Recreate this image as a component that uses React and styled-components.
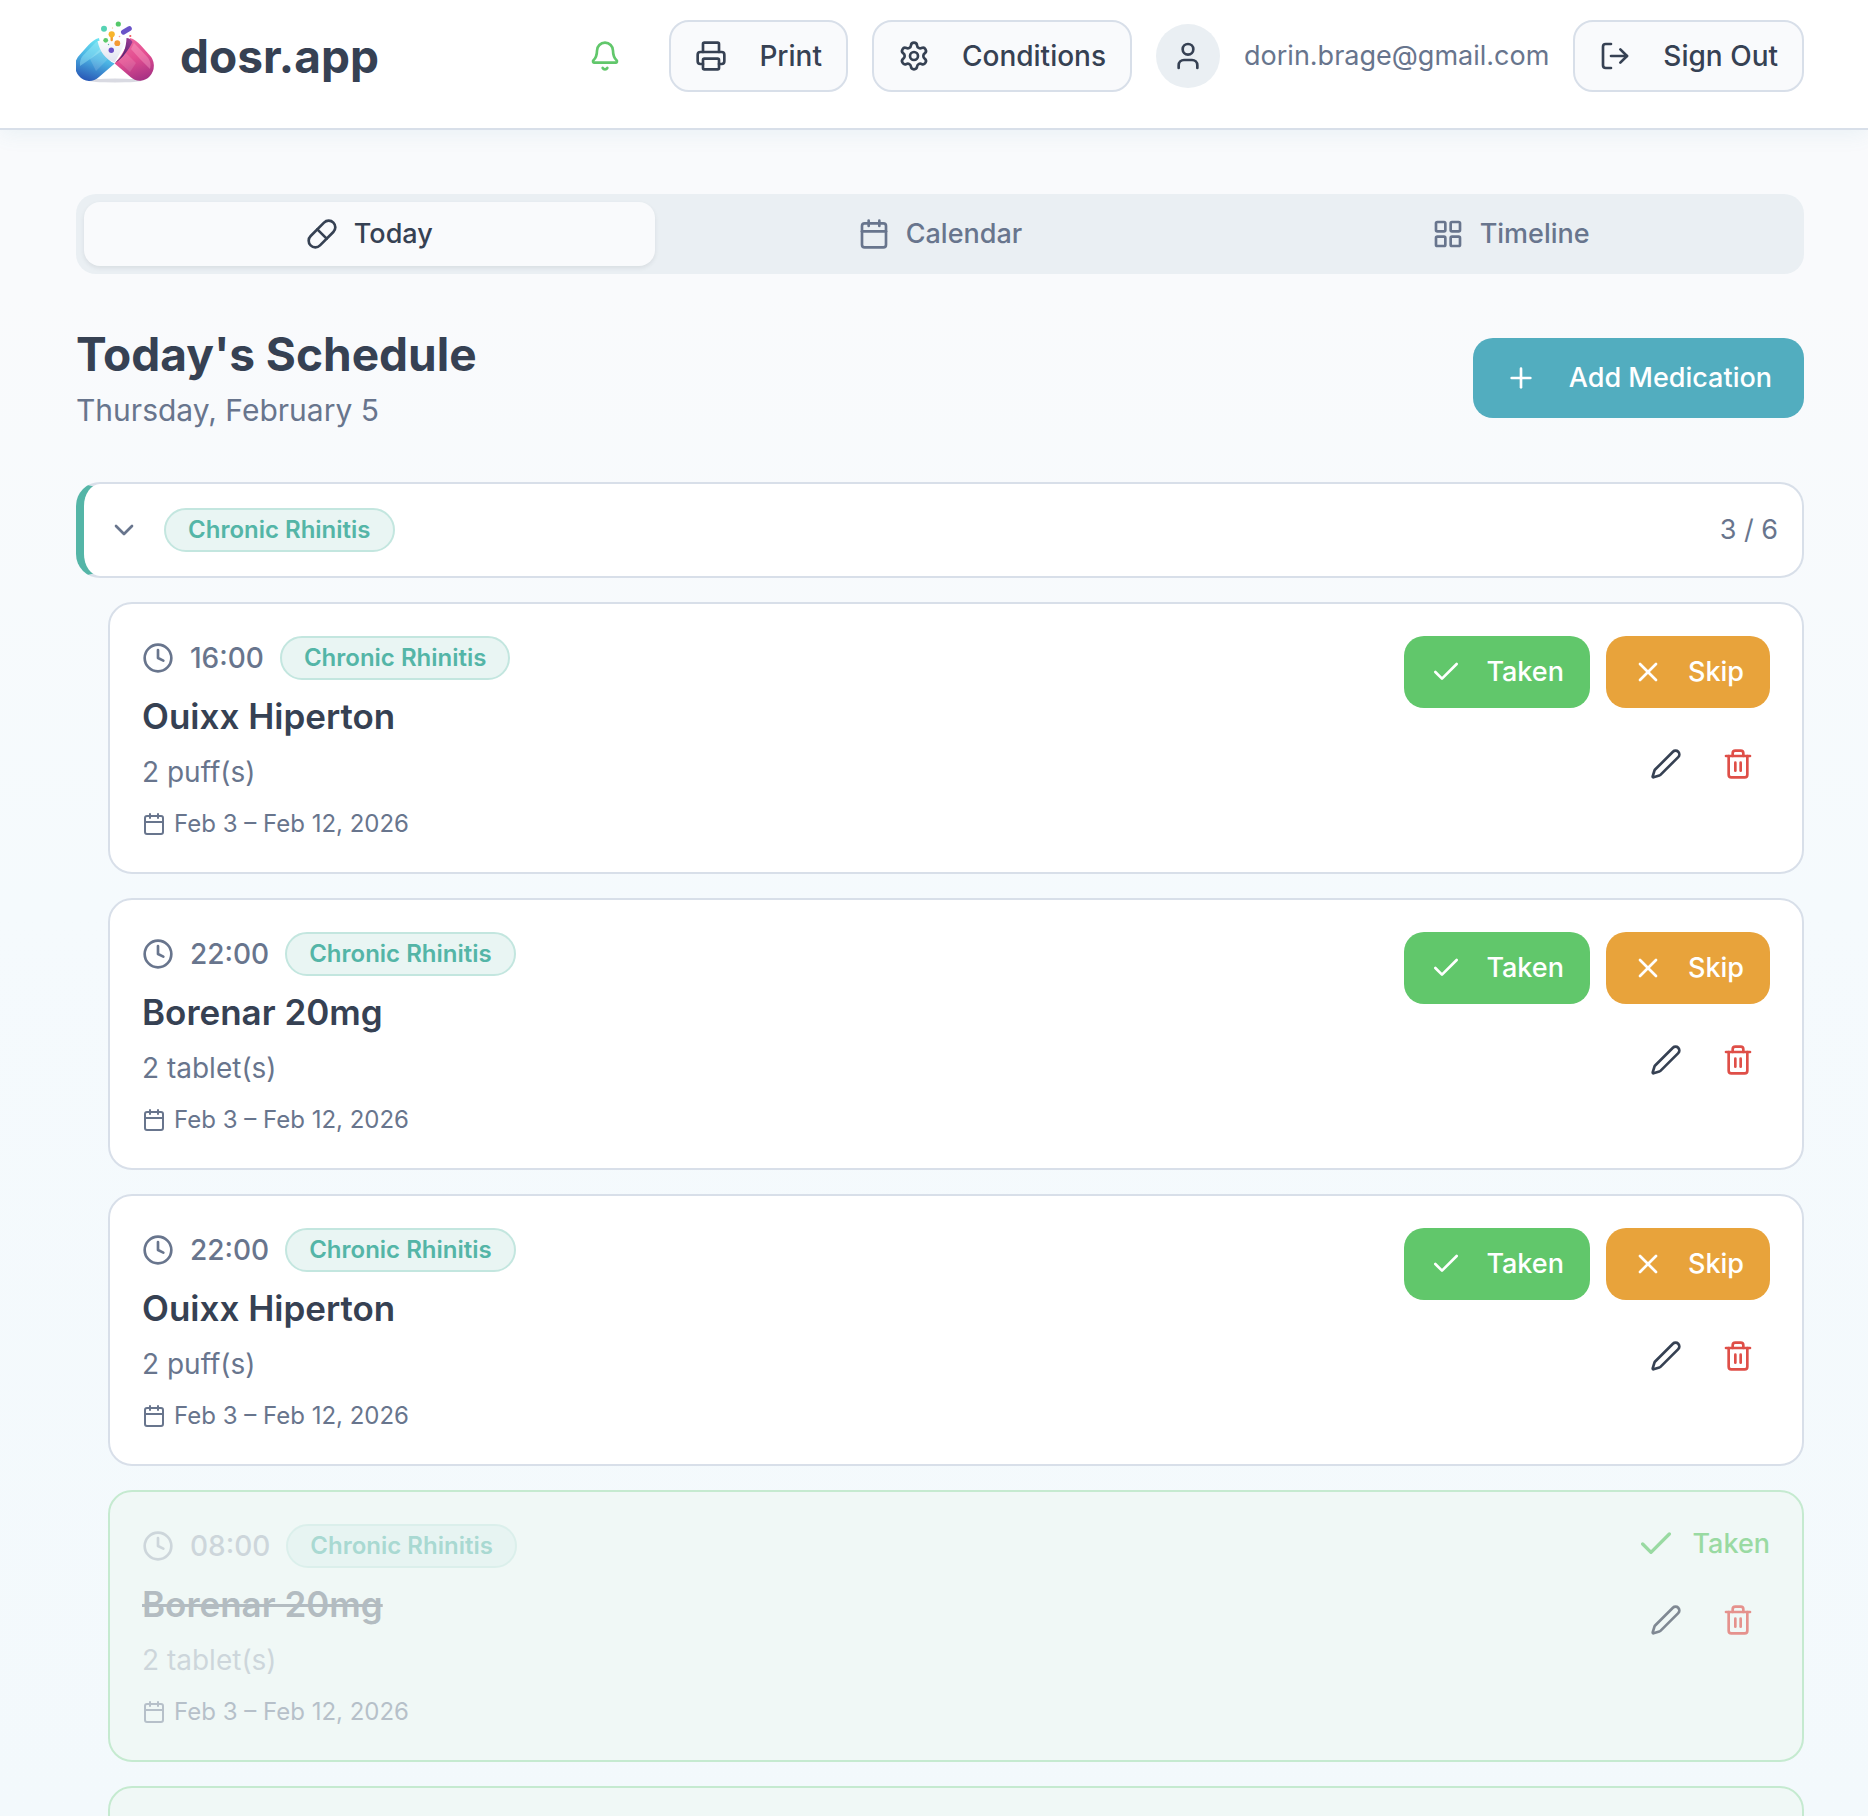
import {
    Bell,
    Calendar,
    Check,
    ChevronDown,
    Clock,
    LayoutGrid,
    LogOut,
    Pen,
    Pill,
    Plus,
    Printer,
    Settings,
    Trash2,
    User,
    X,
} from 'lucide-react';
import { useState } from 'react';
import styled, { createGlobalStyle, css } from 'styled-components';

const Colors = {
    text: '#364153',
    muted: '#68758d',
    border: '#d8dfe9',
    surface: '#f9fafc',
    panel: '#eaeff3',
    primary: '#52adbf',
    success: '#61c76b',
    warning: '#e8a33b',
    danger: '#df4f48',
    condition: '#54b5a7',
};

const GlobalStyle = createGlobalStyle`
    * {
        box-sizing: border-box;
    }
    body {
        margin: 0;
        color: ${Colors.text};
        font-family: Inter, "Liberation Sans", sans-serif;
        font-size: 28px;
        line-height: 40px;
    }
    h1, h2, h3, p {
        margin: 0;
    }
    button {
        font: inherit;
        color: inherit;
        cursor: pointer;
    }
    svg {
        flex-shrink: 0;
    }
`;

const Page = styled.div`
    height: 100vh;
    overflow: hidden;
    background: linear-gradient(180deg, #f9fafc 0%, #f9fafc 16%, #f5fafd 50%, #f3f9fc 100%);
`;

const Header = styled.header`
    display: flex;
    justify-content: space-between;
    align-items: center;
    padding: 16px 64px 32px 76px;
    background-color: #ffffff;
    border-bottom: 2px solid ${Colors.border};
    box-shadow: 0 4px 20px rgba(82, 160, 180, 0.09);
`;

const Brand = styled.a`
    display: flex;
    align-items: center;
    gap: 24px;
    color: ${Colors.text};
    font-size: 46px;
    line-height: 64px;
    font-weight: 700;
    text-decoration: none;
`;

const HeaderActions = styled.div`
    display: flex;
    align-items: center;
    gap: 24px;
`;

const Avatar = styled.div`
    display: flex;
    justify-content: center;
    align-items: center;
    width: 64px;
    height: 64px;
    border-radius: 50%;
    background-color: ${Colors.panel};
`;

const Email = styled.span`
    color: ${Colors.muted};
    font-size: 27px;
`;

const buttonVariants = {
    outline: css`
        gap: 32px;
        color: ${Colors.text};
        font-size: 28px;
        background-color: ${Colors.surface};
        border-color: ${Colors.border};
    `,
    primary: css`
        gap: 32px;
        height: 80px;
        padding: 0 30px;
        background-color: ${Colors.primary};
    `,
    success: css`
        background-color: ${Colors.success};
    `,
    warning: css`
        background-color: ${Colors.warning};
    `,
};

const Button = styled.button`
    display: flex;
    align-items: center;
    gap: 24px;
    height: 72px;
    padding: 0 24px;
    color: #ffffff;
    font-size: 27px;
    font-weight: 500;
    white-space: nowrap;
    border: 2px solid transparent;
    border-radius: 20px;
    ${({ $variant }) => buttonVariants[$variant]}
`;

const IconButton = styled.button`
    display: flex;
    justify-content: center;
    align-items: center;
    width: ${({ $wide }) => ($wide ? '80px' : '64px')};
    height: 64px;
    padding: 0;
    color: ${({ $color }) => $color};
    background: none;
    border: none;
`;

const Main = styled.main`
    padding: 64px 64px 64px 76px;
`;

const Tabs = styled.div`
    display: grid;
    grid-template-columns: repeat(3, 1fr);
    padding: 8px;
    border-radius: 20px;
    background-color: ${Colors.panel};
`;

const Tab = styled.button`
    display: flex;
    justify-content: center;
    align-items: center;
    gap: 16px;
    height: 64px;
    color: ${({ $active }) => ($active ? Colors.text : Colors.muted)};
    font-size: 27px;
    font-weight: 500;
    background-color: ${({ $active }) => ($active ? Colors.surface : 'transparent')};
    border: none;
    border-radius: 16px;
    box-shadow: ${({ $active }) => ($active ? '0 2px 4px rgba(54, 65, 83, 0.1)' : 'none')};
`;

const TitleRow = styled.div`
    display: flex;
    justify-content: space-between;
    align-items: center;
    margin: 48px 0;
`;

const Title = styled.h1`
    font-size: 46px;
    line-height: 64px;
    font-weight: 700;
`;

const Subtitle = styled.p`
    color: ${Colors.muted};
    font-size: 30px;
    line-height: 48px;
`;

const GroupHeader = styled.button`
    display: flex;
    align-items: center;
    gap: 24px;
    width: 100%;
    height: 96px;
    padding: 0 24px;
    color: ${Colors.muted};
    background-color: #ffffff;
    border: 2px solid ${Colors.border};
    border-left: 8px solid ${Colors.condition};
    border-radius: 24px;
`;

const GroupCount = styled.span`
    margin-left: auto;
    font-size: 27px;
`;

const Badge = styled.span`
    display: flex;
    align-items: center;
    height: 44px;
    padding: 0 22px;
    color: ${Colors.condition};
    font-size: 24px;
    font-weight: 600;
    white-space: nowrap;
    background-color: #e9f5f3;
    border: 2px solid #c3e6df;
    border-radius: 22px;
`;

const DoseList = styled.div`
    display: flex;
    flex-direction: column;
    gap: 24px;
    padding: 24px 0 0 32px;
`;

const TimeRow = styled.div`
    display: flex;
    align-items: center;
    gap: 16px;
`;

const Time = styled.div`
    display: flex;
    align-items: center;
    gap: 16px;
    color: ${Colors.muted};
    font-weight: 500;
`;

const MedName = styled.h3`
    margin: 8px 0;
    font-size: 35px;
    line-height: 56px;
    font-weight: 600;
`;

const Amount = styled.p`
    color: ${Colors.muted};
`;

const Period = styled.p`
    display: flex;
    align-items: center;
    gap: 8px;
    margin-top: 16px;
    color: ${Colors.muted};
    font-size: 24px;
    line-height: 32px;
`;

const Actions = styled.div`
    display: flex;
    flex-direction: column;
    align-items: flex-end;
    gap: 24px;
`;

const ActionRow = styled.div`
    display: flex;
    gap: ${({ $tight }) => ($tight ? '8px' : '16px')};
`;

const TakenLabel = styled.div`
    display: flex;
    align-items: center;
    gap: 16px;
    color: ${Colors.success};
    font-size: 27px;
    font-weight: 500;
`;

const Card = styled.article`
    display: flex;
    justify-content: space-between;
    min-height: 272px;
    padding: 32px;
    background-color: #ffffff;
    border: 2px solid ${Colors.border};
    border-radius: 24px;

    ${({ $done }) =>
        $done &&
        css`
            background-color: #f0f8f6;
            border-color: #c5ead0;

            ${Time}, ${Amount} {
                opacity: 0.25;
            }
            ${Badge} {
                opacity: 0.45;
                background-color: #ddf1ee;
            }
            ${Period} {
                opacity: 0.42;
            }
            ${MedName} {
                opacity: 0.32;
                text-decoration: line-through;
            }
            ${Actions} {
                opacity: 0.6;
            }
        `}
`;

const Icon = ({ as: Glyph, size = 32 }) => <Glyph size={size} strokeWidth={2} aria-hidden="true" />;

const Logo = () => (
    <svg width="80" height="80" viewBox="0 0 80 80" aria-hidden="true">
        <defs>
            <linearGradient id="blueShell" x1="0.7" y1="0" x2="0.4" y2="1">
                <stop offset="0" stopColor="#6fe9f3" />
                <stop offset="0.5" stopColor="#4bb4e4" />
                <stop offset="1" stopColor="#2a5cb8" />
            </linearGradient>
            <linearGradient id="pinkShell" x1="0.3" y1="0" x2="0.6" y2="1">
                <stop offset="0" stopColor="#ef6aa0" />
                <stop offset="0.5" stopColor="#e24d90" />
                <stop offset="1" stopColor="#a83284" />
            </linearGradient>
            <linearGradient id="pinkInside" x1="0.8" y1="0" x2="0.2" y2="1">
                <stop offset="0" stopColor="#9c3a94" />
                <stop offset="1" stopColor="#3a1c63" />
            </linearGradient>
            <linearGradient id="powder" x1="0.5" y1="0" x2="0.5" y2="1">
                <stop offset="0" stopColor="#ffffff" />
                <stop offset="1" stopColor="#dfe3f0" />
            </linearGradient>
        </defs>
        <ellipse cx="39" cy="64.5" rx="27" ry="2" fill="#c9cbd6" opacity="0.7" />
        <path
            d="M23 22C19 23 15.500 26 12.500 29L4 38.500A15.500 15.500 0 0 0 3 60A13.500 13.500 0 0 0 23 61L38.700 47.500C30 44 25 34 23 22Z"
            fill="url(#blueShell)"
        />
        <path
            d="M20 26L7 39.500C4.500 42.500 3.500 46 4 50L20 39L27 34C25 31 23.500 28 23 25.500Z"
            fill="#a5f1fa"
            opacity="0.4"
        />
        <path d="M14 43L24 33L32 43L20 55Z" fill="#ffffff" opacity="0.14" />
        <path
            d="M54 22C58 23 61.500 26 64.500 29L73 38.500A15.500 15.500 0 0 1 74 60A13.500 13.500 0 0 1 54.500 61L38.700 47.500C44 42 50 32 54 22Z"
            fill="url(#pinkShell)"
        />
        <path d="M58 27L70 39.500C74 43.500 75.500 48 74 53L64 43L55 33Z" fill="#ffb3d0" opacity="0.35" />
        <path d="M49 36L60 47L54 56L42 45Z" fill="#ffffff" opacity="0.12" />
        <path d="M21.500 25C24 36 29 43 38.700 46.500C42 41 47 32 51 21L43 25L33 24Z" fill="url(#powder)" />
        <path
            d="M50.500 22C53 22 55.500 24 56.500 26C52.500 34 47 42 39.500 46.500C38 46.500 50 42 50.500 22Z"
            fill="url(#pinkInside)"
        />
        <circle cx="28" cy="12.700" r="3" fill="#56d3b4" />
        <circle cx="42.300" cy="8" r="2.600" fill="#55c868" />
        <path d="M47.500 16.200L53.300 12.600" stroke="#6a54c8" strokeWidth="5" strokeLinecap="round" />
        <path d="M35.700 19V24" stroke="#ef9b2f" strokeWidth="2.400" strokeLinecap="round" />
        <circle cx="35.700" cy="18.300" r="3.100" fill="#f8b52c" />
        <circle cx="29.700" cy="24.300" r="2.400" fill="#5cc96b" />
        <circle cx="41.300" cy="27.200" r="2.900" fill="#f39a35" />
        <circle cx="35.300" cy="34.300" r="2.700" fill="#6a4fc6" />
        <circle cx="54.300" cy="20" r="1.100" fill="#f0595c" />
        <circle cx="43.500" cy="20.500" r="0.800" fill="#f49aa0" />
        <circle cx="32.500" cy="28.500" r="0.700" fill="#55c0a0" />
        <circle cx="36.500" cy="12" r="0.700" fill="#f7c9a0" />
    </svg>
);

const tabs = [
    { id: 'today', label: 'Today', icon: Pill },
    { id: 'calendar', label: 'Calendar', icon: Calendar },
    { id: 'timeline', label: 'Timeline', icon: LayoutGrid },
];

const doses = [
    { id: 1, time: '16:00', name: 'Ouixx Hiperton', amount: '2 puff(s)' },
    { id: 2, time: '22:00', name: 'Borenar 20mg', amount: '2 tablet(s)' },
    { id: 3, time: '22:00', name: 'Ouixx Hiperton', amount: '2 puff(s)' },
    { id: 4, time: '08:00', name: 'Borenar 20mg', amount: '2 tablet(s)', done: true },
];

const DoseCard = ({ dose }) => (
    <Card $done={dose.done}>
        <div>
            <TimeRow>
                <Time>
                    <Icon as={Clock} />
                    <time>{dose.time}</time>
                </Time>
                <Badge>Chronic Rhinitis</Badge>
            </TimeRow>
            <MedName>{dose.name}</MedName>
            <Amount>{dose.amount}</Amount>
            <Period>
                <Icon as={Calendar} size={24} />
                Feb 3 – Feb 12, 2026
            </Period>
        </div>
        <Actions>
            {dose.done ? (
                <TakenLabel>
                    <Icon as={Check} size={40} />
                    Taken
                </TakenLabel>
            ) : (
                <ActionRow>
                    <Button type="button" $variant="success">
                        <Icon as={Check} />
                        Taken
                    </Button>
                    <Button type="button" $variant="warning">
                        <Icon as={X} />
                        Skip
                    </Button>
                </ActionRow>
            )}
            <ActionRow $tight>
                <IconButton type="button" aria-label="Edit" $color={Colors.text}>
                    <Icon as={Pen} />
                </IconButton>
                <IconButton type="button" aria-label="Delete" $color={Colors.danger}>
                    <Icon as={Trash2} />
                </IconButton>
            </ActionRow>
        </Actions>
    </Card>
);

export default function App() {
    const [activeTab, setActiveTab] = useState('today');
    const [isOpen, setIsOpen] = useState(true);

    return (
        <Page>
            <GlobalStyle />
            <Header>
                <Brand href="#">
                    <Logo />
                    dosr.app
                </Brand>
                <HeaderActions>
                    <IconButton type="button" aria-label="Notifications" $wide $color={Colors.success}>
                        <Icon as={Bell} />
                    </IconButton>
                    <Button type="button" $variant="outline">
                        <Icon as={Printer} />
                        Print
                    </Button>
                    <Button type="button" $variant="outline">
                        <Icon as={Settings} />
                        Conditions
                    </Button>
                    <Avatar>
                        <Icon as={User} />
                    </Avatar>
                    <Email>dorin.brage@gmail.com</Email>
                    <Button type="button" $variant="outline">
                        <Icon as={LogOut} />
                        Sign Out
                    </Button>
                </HeaderActions>
            </Header>
            <Main>
                <Tabs role="tablist">
                    {tabs.map((tab) => (
                        <Tab
                            key={tab.id}
                            type="button"
                            role="tab"
                            aria-selected={tab.id === activeTab}
                            $active={tab.id === activeTab}
                            onClick={() => setActiveTab(tab.id)}
                        >
                            <Icon as={tab.icon} />
                            {tab.label}
                        </Tab>
                    ))}
                </Tabs>
                <TitleRow>
                    <div>
                        <Title>Today's Schedule</Title>
                        <Subtitle>Thursday, February 5</Subtitle>
                    </div>
                    <Button type="button" $variant="primary">
                        <Icon as={Plus} />
                        Add Medication
                    </Button>
                </TitleRow>
                <GroupHeader type="button" aria-expanded={isOpen} onClick={() => setIsOpen(!isOpen)}>
                    <Icon as={ChevronDown} />
                    <Badge>Chronic Rhinitis</Badge>
                    <GroupCount>3 / 6</GroupCount>
                </GroupHeader>
                {isOpen && (
                    <DoseList>
                        {doses.map((dose) => (
                            <DoseCard key={dose.id} dose={dose} />
                        ))}
                        <Card $done />
                    </DoseList>
                )}
            </Main>
        </Page>
    );
}
